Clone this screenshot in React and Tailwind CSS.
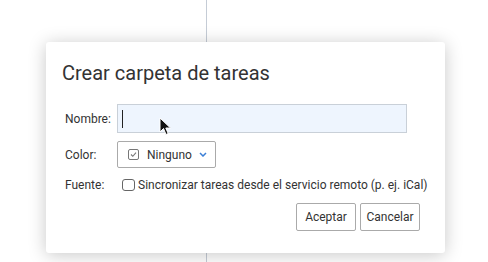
import React from "react";

const CursorArrow = () => (
  <svg width="14" height="20" viewBox="0 0 14 20" className="absolute left-[159px] top-[117px]">
    <path d="M1 1 L1 15 L4.5 11.5 L7 17.5 L9.2 16.5 L6.8 11 L11.5 11 Z" fill="#111" stroke="#fff" strokeWidth="1" />
  </svg>
);

const App = () => {
  return (
    <div className="relative h-[262px] w-[488px] overflow-hidden bg-white font-['Roboto',sans-serif] text-[#333]">
      {/* background column divider */}
      <div className="ml-[206px] h-full w-px bg-[#c5ccd6]" />

      {/* modal */}
      <div className="absolute left-[46px] top-[42px] w-[399px] rounded-[3px] bg-white pl-[16px] pr-[25px] pt-[17px] pb-[22px] shadow-[0_2px_18px_rgba(0,0,0,0.22)]">
        <h2 className="text-[20px] leading-[28px] text-[#333]">Crear carpeta de tareas</h2>

        <div className="mt-[17px] grid grid-cols-[52px_1fr] items-center gap-y-[8px] pl-[3px] text-[12px]">
          <label>Nombre:</label>
          <div className="flex h-[29px] w-[290px] items-center border border-[#c9d0d8] bg-[#eef5fe] px-[4px]">
            <span className="h-[18px] w-px bg-[#222]" />
          </div>

          <label>Color:</label>
          <div>
            <button className="flex h-[27px] w-[99px] items-center rounded-[2px] border border-[#aaa] bg-white pl-[10px] text-[12px] text-[#333]">
              <svg width="11" height="11" viewBox="0 0 11 11" className="mr-[8px]">
                <rect x="0.5" y="0.5" width="10" height="10" rx="1.5" fill="none" stroke="#777" />
                <path d="M3 5.5 L4.8 7.3 L8 3.6" fill="none" stroke="#777" strokeWidth="1.1" />
              </svg>
              Ninguno
              <svg width="8" height="5" viewBox="0 0 8 5" className="ml-[7px]">
                <path d="M1 1 L4 4 L7 1" fill="none" stroke="#3b7fd6" strokeWidth="1.5" />
              </svg>
            </button>
          </div>

          <label className="leading-[18px]">Fuente:</label>
          <label className="flex h-[18px] items-center whitespace-nowrap pl-[5px]">
            <span className="mr-[3px] h-[12px] w-[13px] shrink-0 rounded-[3px] border border-[#666] bg-white" />
            Sincronizar tareas desde el servicio remoto (p. ej. iCal)
          </label>
        </div>

        <div className="mt-[9px] flex justify-end gap-[4px] text-[12px]">
          <button className="h-[28px] w-[60px] rounded-[2px] border border-[#aaa] bg-white text-[#333]">Aceptar</button>
          <button className="h-[28px] w-[60px] rounded-[2px] border border-[#aaa] bg-white text-[#333]">Cancelar</button>
        </div>
      </div>

      <CursorArrow />
    </div>
  );
};

export default App;
